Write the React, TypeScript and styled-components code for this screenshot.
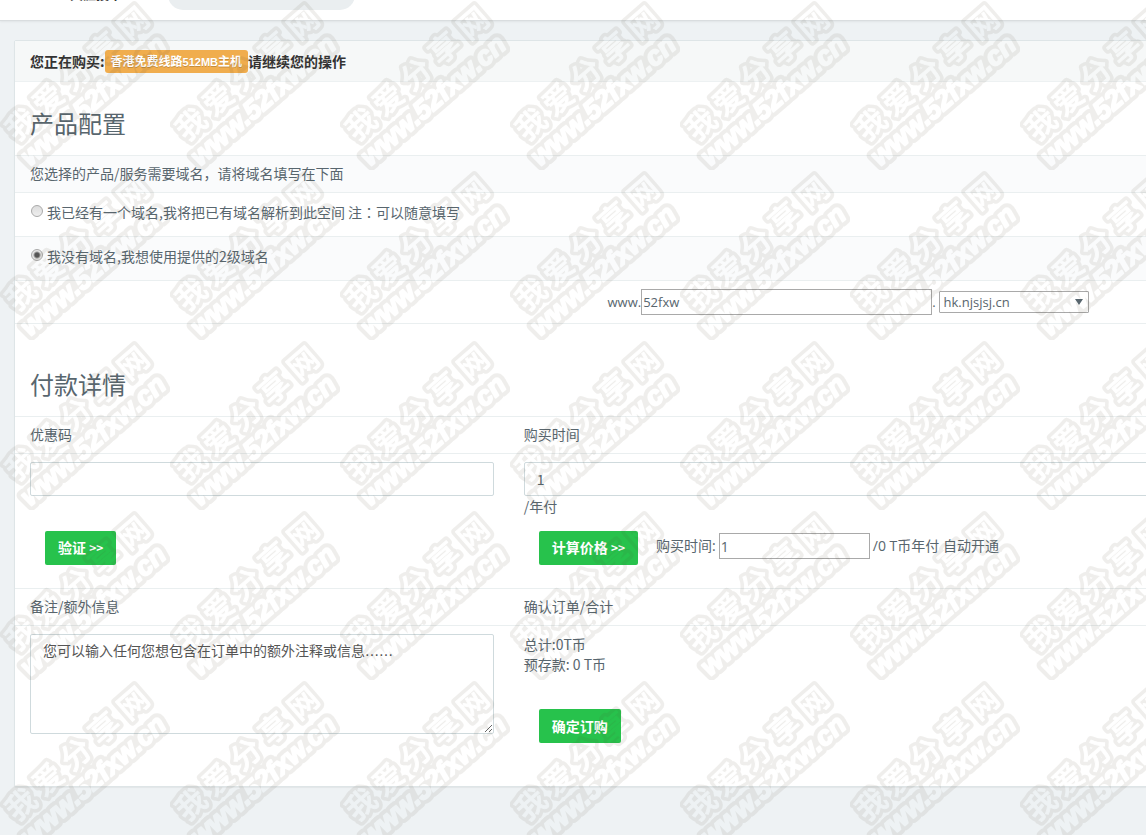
import React from "react";
import styled, { createGlobalStyle, css } from "styled-components";

const GlobalStyle = createGlobalStyle`
  *, *::before, *::after { box-sizing: border-box; }
  body {
    margin: 0;
    background: #eef2f4;
    color: #58666e;
    font: 14px/20px "Noto Sans CJK SC", sans-serif;
  }
  input, select, textarea, button { font: inherit; color: inherit; margin: 0; }
`;

const Page = styled.div`
  position: relative;
  min-height: 100vh;
  overflow: hidden;
`;

const TopBar = styled.header`
  display: flex;
  align-items: flex-end;
  gap: 46px;
  height: 21px;
  padding: 0 0 10px 70px;
  overflow: hidden;
  background: #fff;
  border-bottom: 1px solid #d9dddf;
  box-shadow: 0 1px 2px rgba(0, 0, 0, 0.06);
`;

const TopTitle = styled.div`
  width: 52px;
  padding-bottom: 6px;
  font-size: 13px;
  line-height: 20px;
  font-weight: 700;
  color: #333;
  white-space: nowrap;
`;

const SearchBox = styled.input`
  width: 187px;
  height: 30px;
  padding: 0 12px 6px;
  border: 0;
  border-radius: 15px;
  background: #eaeef0;
  font-size: 12px;
  &::placeholder { color: #888; opacity: 1; }
`;

const Main = styled.main`
  padding: 19px 0 48px 14px;
`;

const Panel = styled.form`
  margin-right: -55px;
  padding-bottom: 31px;
  background: #fff;
  border: 1px solid #dee5e7;
  border-radius: 2px;
  box-shadow: 0 1px 1px rgba(0, 0, 0, 0.05);
`;

const PanelHead = styled.div`
  display: flex;
  align-items: center;
  height: 41px;
  padding: 0 15px;
  font-weight: 600;
  color: #333;
  background: #f6f8f8;
  border-bottom: 1px solid #edf1f2;
`;

const Tag = styled.span`
  padding: 0 6px;
  border-radius: 3px;
  background: #f0ad4e;
  color: #fff;
  font-size: 12px;
  line-height: 21px;
  font-weight: 700;
  text-shadow: 0 1px 0 rgba(0, 0, 0, 0.2);
`;

const TagSize = styled.span`
  font-family: "Liberation Sans", sans-serif;
  font-size: 11px;
`;

const SectionTitle = styled.h2<{ $spaced?: boolean }>`
  margin: 0;
  padding: ${(p) => (p.$spaced ? "43px" : "24px")} 15px 15px;
  font-size: 24px;
  line-height: 34px;
  font-weight: 400;
`;

const Row = styled.div<{ $shaded?: boolean; $height: number }>`
  display: flex;
  align-items: center;
  height: ${(p) => p.$height}px;
  padding: 0 15px 2px;
  border-top: 1px solid #eaeff0;
  background: ${(p) => (p.$shaded ? "#fafbfc" : "#fff")};
`;

const ChoiceRow = styled(Row)`
  padding-bottom: 6px;
`;

const DomainRow = styled(Row)`
  padding: 0 15px 0 50%;
  border-bottom: 1px solid #eaeff0;
  font-family: "Open Sans", sans-serif;
  font-size: 13px;
`;

const MidPunctuation = styled.span`
  font-family: "Noto Sans CJK TC", sans-serif;
`;

const Choice = styled.label`
  display: flex;
  align-items: center;
  gap: 4px;
`;

const Radio = styled.input`
  appearance: none;
  width: 12px;
  height: 12px;
  margin: 0 0 2px 1px;
  border: 1px solid #aaa;
  border-radius: 50%;
  background: linear-gradient(#ddd, #eee);
  &:checked {
    background: radial-gradient(circle, #555 0 2px, #e6e6e6 4px);
  }
`;

const PlainInput = styled.input<{ $width: number }>`
  width: ${(p) => p.$width}px;
  height: 26px;
  padding: 0 1px;
  border: 1px solid #a9a9a9;
  background: #fff;
`;

const SelectWrap = styled.span`
  position: relative;
  margin-left: 3px;
  &::after {
    content: "";
    position: absolute;
    right: 6px;
    top: 8px;
    border: 4px solid transparent;
    border-top: 6px solid #58666e;
    border-bottom: 0;
    pointer-events: none;
  }
`;

const Select = styled.select`
  appearance: none;
  display: block;
  width: 150px;
  height: 22px;
  padding: 0 4px;
  border: 1px solid #a9a9a9;
  border-radius: 1px;
  background: #fff;
  line-height: 20px;
`;

const Columns = styled.div`
  display: grid;
  grid-template-columns: 5fr 7fr;
`;

const captionStyle = css`
  padding: 7px 15px 9px;
  border-top: 1px solid #eaeff0;
  border-bottom: 1px solid #eaeff0;
`;

const Label = styled.label`
  ${captionStyle}
`;

const Caption = styled.div`
  ${captionStyle}
`;

const Cell = styled.div`
  padding: 8px 15px 0;
`;

const Field = styled.input`
  display: block;
  width: 100%;
  height: 34px;
  padding: 6px 12px;
  border: 1px solid #cfdadd;
  border-radius: 2px;
  background: #fff;
`;

const Unit = styled.div`
  height: 20px;
`;

const Actions = styled.div`
  display: flex;
  align-items: center;
  margin: 15px 0 23px;
  padding-left: 15px;
`;

const CouponActions = styled(Actions)`
  margin-top: 35px;
`;

const Button = styled.button`
  height: 34px;
  padding: 0 13px 1px;
  border: 0;
  border-radius: 2px;
  background: #27c24c;
  color: #fff;
  font-weight: 700;
  white-space: nowrap;
`;

const Arrows = styled.span`
  font-size: 12px;
`;

const Price = styled.div`
  display: flex;
  align-items: center;
  gap: 3px;
  margin-left: 18px;
  padding-bottom: 4px;
  font-family: "Open Sans", "Noto Sans CJK SC", sans-serif;
`;

const Notes = styled.textarea`
  display: block;
  width: 100%;
  height: 100px;
  padding: 6px 12px;
  border: 1px solid #cfdadd;
  border-radius: 2px;
  background: #fff;
  color: #555;
  font-family: "DejaVu Sans", "Noto Sans CJK SC", sans-serif;
`;

const Confirm = styled(Actions)`
  margin: 35px 0 12px;
`;

const Overlay = styled.svg`
  position: absolute;
  inset: 0;
  width: 100%;
  height: 100%;
  pointer-events: none;
`;

const stampGlyphs = [
  { char: "我", x: 21, y: 124 },
  { char: "爱", x: 48, y: 99 },
  { char: "分", x: 76, y: 74 },
  { char: "享", x: 104, y: 48 },
  { char: "网", x: 133, y: 23 },
];

function Watermark() {
  return (
    <Overlay aria-hidden="true">
      <defs>
        <g id="stamp-name" fontFamily="'Noto Sans CJK SC', sans-serif" fontSize="30" fontWeight="500" textAnchor="middle" strokeLinejoin="round">
          {stampGlyphs.map((g) => (
            <text key={g.char} transform={`translate(${g.x} ${g.y}) rotate(-41)`} y="11">{g.char}</text>
          ))}
        </g>
        <g id="stamp-site" fontFamily="'Liberation Sans', sans-serif" fontSize="27" fontWeight="700" fontStyle="italic" strokeLinejoin="round">
          <text transform="translate(30 167) rotate(-41)">www.52fxw.cn</text>
        </g>
        <mask id="stamp-mask" maskUnits="userSpaceOnUse" x="0" y="0" width="170" height="170">
          <use href="#stamp-name" fill="#fff" stroke="#fff" strokeWidth="8" />
          <use href="#stamp-site" fill="#fff" stroke="#fff" strokeWidth="10" />
          <use href="#stamp-name" fill="#000" stroke="#000" strokeWidth="1" />
          <use href="#stamp-site" fill="#000" stroke="#000" strokeWidth="2" />
        </mask>
        <pattern id="stamp" width="170" height="170" patternUnits="userSpaceOnUse">
          <rect width="170" height="170" fill="#504030" fillOpacity="0.09" mask="url(#stamp-mask)" />
        </pattern>
      </defs>
      <rect width="100%" height="100%" fill="url(#stamp)" />
    </Overlay>
  );
}

export default function App() {
  return (
    <Page>
      <GlobalStyle />
      <TopBar>
        <TopTitle>天涯技术</TopTitle>
        <SearchBox aria-label="搜索" placeholder="请搜索" />
      </TopBar>
      <Main>
        <Panel onSubmit={(e) => e.preventDefault()}>
          <PanelHead>
            您正在购买:<Tag>香港免费线路<TagSize>512MB</TagSize>主机</Tag>请继续您的操作
          </PanelHead>

          <SectionTitle>产品配置</SectionTitle>
          <Row $height={37} $shaded>您选择的产品/服务需要域名，请将域名填写在下面</Row>
          <ChoiceRow $height={44}>
            <Choice>
              <Radio type="radio" name="domain" />
              <span>
                我已经有一个域名,我将把已有域名解析到此空间 注<MidPunctuation lang="zh-TW">：</MidPunctuation>可以随意填写
              </span>
            </Choice>
          </ChoiceRow>
          <ChoiceRow $height={44} $shaded>
            <Choice>
              <Radio type="radio" name="domain" defaultChecked />
              我没有域名,我想使用提供的2级域名
            </Choice>
          </ChoiceRow>
          <DomainRow $height={44}>
            <label htmlFor="sub">www.</label>
            <PlainInput id="sub" $width={291} defaultValue="52fxw" />.
            <SelectWrap>
              <Select aria-label="域名后缀">
                <option>hk.njsjsj.cn</option>
              </Select>
            </SelectWrap>
          </DomainRow>

          <SectionTitle $spaced>付款详情</SectionTitle>
          <Columns>
            <Label htmlFor="coupon">优惠码</Label>
            <Label htmlFor="period">购买时间</Label>
            <Cell>
              <Field id="coupon" />
              <CouponActions>
                <Button type="button">验证 <Arrows>&gt;&gt;</Arrows></Button>
              </CouponActions>
            </Cell>
            <Cell>
              <Field id="period" defaultValue="1" />
              <Unit>/年付</Unit>
              <Actions>
                <Button type="button">计算价格 <Arrows>&gt;&gt;</Arrows></Button>
                <Price>
                  <label htmlFor="years">购买时间:</label>
                  <PlainInput id="years" $width={151} defaultValue="1" />
                  <span>/0 T币年付 自动开通</span>
                </Price>
              </Actions>
            </Cell>
            <Label htmlFor="notes">备注/额外信息</Label>
            <Caption>确认订单/合计</Caption>
            <Cell>
              <Notes id="notes" defaultValue="您可以输入任何您想包含在订单中的额外注释或信息……" />
            </Cell>
            <Cell>
              <div>总计:0T币</div>
              <div>预存款: 0 T币</div>
              <Confirm>
                <Button type="submit">确定订购</Button>
              </Confirm>
            </Cell>
          </Columns>
        </Panel>
      </Main>
      <Watermark />
    </Page>
  );
}
